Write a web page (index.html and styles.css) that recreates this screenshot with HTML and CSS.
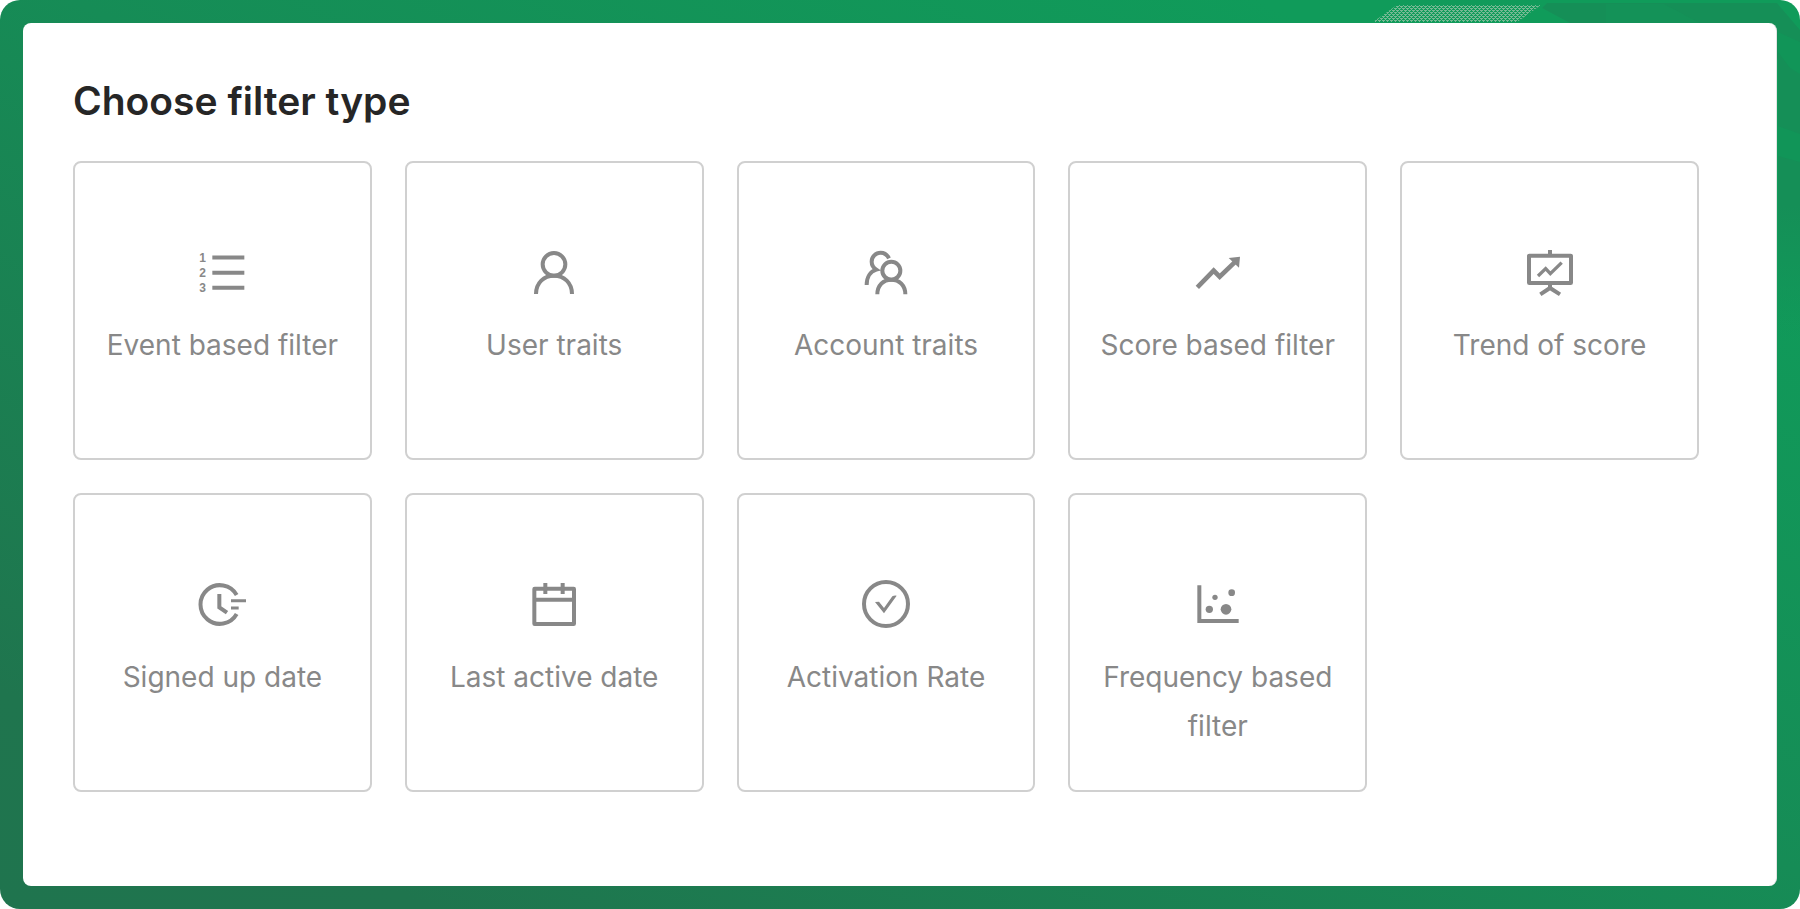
FILE: index.html
```html
<!DOCTYPE html>
<html lang="en">
<head>
    <meta charset="UTF-8">
    <meta name="viewport" content="width=device-width, initial-scale=1.0">
    <title>Choose filter type</title>
    <link rel="stylesheet" href="styles.css">
</head>
<body>
    <div class="frame">
        <!-- Faint shapes on the green frame -->
        <svg class="frame-art" viewBox="0 0 430 340" aria-hidden="true">
            <defs>
                <pattern id="dots" width="4" height="4" patternUnits="userSpaceOnUse">
                    <path d="M0 0H3V1H0ZM1 1H2V2H1ZM0 2H1V3H0ZM2 2H4V3H2ZM3 3H4V4H3Z" fill="#76b994"/>
                </pattern>
                <linearGradient id="shade" x1="0" y1="0" x2="0" y2="1">
                    <stop offset="0.6" stop-color="#158f57"/>
                    <stop offset="1" stop-color="#158f57" stop-opacity="0"/>
                </linearGradient>
            </defs>
            <path d="M177 3H407L430 30V340H408V60L380 23H200L172 8Z" fill="url(#shade)"/>
            <path d="M236 4H294L330 23H236Z" fill="#149258"/>
            <path d="M408 32L430 42V74L420 68L408 52ZM408 126L430 134V162L408 156Z" fill="#119558"/>
            <path d="M27 5H171L147 22H3Z" fill="url(#dots)"/>
        </svg>

        <main class="panel">
            <h1>Choose filter type</h1>
            <div class="filters">
                <button type="button" class="filter">
                    <svg class="icon" viewBox="38 24 180 180" aria-hidden="true">
                        <path d="M99 67.500H195M99 113H195M99 158.500H195"/>
                        <text x="60" y="80">1</text>
                        <text x="60" y="126">2</text>
                        <text x="60" y="172">3</text>
                    </svg>
                    <span>Event based filter</span>
                </button>
                <button type="button" class="filter">
                    <svg class="icon" viewBox="43 24 180 180" aria-hidden="true">
                        <circle cx="133" cy="88" r="34"/>
                        <path d="M79 177C79 143 103 122 133 122S187 143 187 177"/>
                    </svg>
                    <span>User traits</span>
                </button>
                <button type="button" class="filter">
                    <svg class="icon" viewBox="48 24 180 180" aria-hidden="true">
                        <circle cx="154" cy="107" r="27"/>
                        <path d="M112 178C112 151 130 134 154 134S196 151 196 178"/>
                        <path d="M147 70C141 58 133 53 122 53C107 53 95 65 95 80C95 91 100 98 109 104C91 109 80 126 80 150"/>
                    </svg>
                    <span>Account traits</span>
                </button>
                <button type="button" class="filter">
                    <svg class="icon" viewBox="53 24 180 180" aria-hidden="true">
                        <path d="M81 157L130 107L148 125L196 79" stroke-width="14"/>
                        <path class="solid" d="M175 69L209 65L206 98Z"/>
                    </svg>
                    <span>Score based filter</span>
                </button>
                <button type="button" class="filter">
                    <svg class="icon" viewBox="58 24 180 180" aria-hidden="true">
                        <rect x="85" y="62" width="126" height="82" rx="1"/>
                        <path d="M148 45V62M148 144V160M119 178L148 159L178 178"/>
                        <path d="M112 123L135 101L149 116L183 83" stroke-width="10"/>
                    </svg>
                    <span>Trend of score</span>
                </button>
                <button type="button" class="filter">
                    <svg class="icon" viewBox="38 30 180 180" aria-hidden="true">
                        <path d="M172 90A58 58 0 1 0 172 147"/>
                        <path d="M120 87V127L143 143"/>
                        <path d="M155 107H200M155 129H178" stroke-width="9"/>
                    </svg>
                    <span>Signed up date</span>
                </button>
                <button type="button" class="filter">
                    <svg class="icon" viewBox="43 30 180 180" aria-hidden="true">
                        <rect x="74" y="71" width="119" height="106" rx="1"/>
                        <path d="M74 104H193M107 54V87M159 54V87"/>
                    </svg>
                    <span>Last active date</span>
                </button>
                <button type="button" class="filter">
                    <svg class="icon" viewBox="1038 30 180 180" aria-hidden="true">
                        <circle cx="1128" cy="117" r="66"/>
                        <path class="solid" d="M1095 111L1107 110L1122 129L1147 94Q1152 91 1160 92L1122 145Z"/>
                    </svg>
                    <span>Activation Rate</span>
                </button>
                <button type="button" class="filter">
                    <svg class="icon" viewBox="53 30 180 180" aria-hidden="true">
                        <path d="M87 61V168H205"/>
                        <circle class="solid" cx="117" cy="133" r="11"/>
                        <circle class="solid" cx="134" cy="97" r="8"/>
                        <circle class="solid" cx="184" cy="83" r="10"/>
                        <circle class="solid" cx="167" cy="133" r="16"/>
                    </svg>
                    <span>Frequency based filter</span>
                </button>
            </div>
        </main>
    </div>
</body>
</html>
```
FILE: styles.css
```css
* {
    box-sizing: border-box;
}
body {
    margin: 0;
    background: #fff;
    font-family: Inter, "Liberation Sans", sans-serif;
}
.frame {
    position: relative;
    display: flex;
    min-height: 100vh;
    padding: 23px;
    border-radius: 20px;
    overflow: hidden;
    background: linear-gradient(to top right, #1f744e 0%, #1f754e 12%, #168c56 52%, #109b5a 85%, #109b5a 100%);
}
.frame-art {
    position: absolute;
    top: 0;
    right: 0;
    width: 430px;
    height: 340px;
}
.panel {
    position: relative;
    flex: 1;
    min-width: 0;
    padding: 50px 77px 90px 50px;
    border-right: 1px solid #e4e4e4;
    border-radius: 8px;
    background: #fff;
}
h1 {
    margin: 0 0 32px;
    color: #262626;
    font-size: 39px;
    font-weight: 600;
    line-height: 56px;
}
.filters {
    display: grid;
    grid-template-columns: repeat(5, minmax(0, 1fr));
    gap: 33px;
}
.filter {
    display: flex;
    flex-direction: column;
    align-items: center;
    gap: 18px;
    min-width: 0;
    aspect-ratio: 1;
    padding: 80px 24px 0;
    border: 2px solid #d0d0d0;
    border-radius: 8px;
    background: #fff;
    color: #888;
    font-family: inherit;
    font-size: 28px;
    line-height: 49px;
    text-align: center;
    cursor: pointer;
}
.filter:hover {
    border-color: #109b5a;
}
.icon {
    width: 60px;
    height: 60px;
    flex-shrink: 0;
    fill: none;
    stroke: #888;
    stroke-width: 12px;
}
.icon .solid,
.icon text {
    fill: #888;
    stroke: none;
}
.icon text {
    font: bold 36px "Liberation Sans", sans-serif;
}
```
